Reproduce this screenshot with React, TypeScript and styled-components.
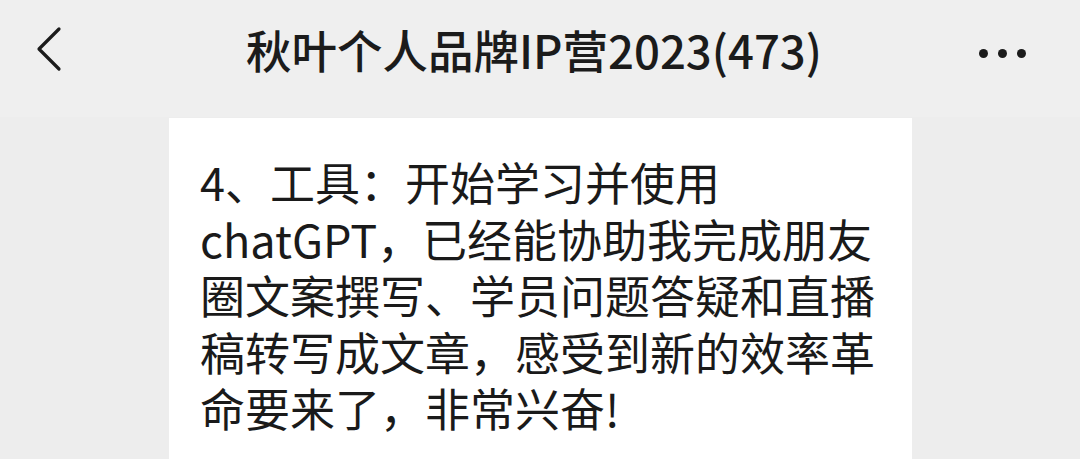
import React from "react";
import styled, { createGlobalStyle } from "styled-components";

const GlobalStyle = createGlobalStyle`
  html, body {
    margin: 0;
    padding: 0;
    background: #ededed;
    font-family: "Noto Sans CJK SC", "Noto Sans", sans-serif;
  }
`;

export default function App() {
  return (
    <>
      <GlobalStyle />
      <StyledPage>
        <StyledHeader>
          <StyledBack aria-label="back">
            <svg width="30" height="48" viewBox="0 0 30 48" fill="none">
              <path
                d="M25 4 L5 24 L25 44"
                stroke="#1b1b1b"
                strokeWidth="3.2"
                strokeLinecap="round"
                strokeLinejoin="round"
              />
            </svg>
          </StyledBack>
          <StyledTitle>秋叶个人品牌IP营2023(473)</StyledTitle>
          <StyledMore aria-label="more">
            <StyledDot />
            <StyledDot />
            <StyledDot />
          </StyledMore>
        </StyledHeader>
        <StyledChat>
          <StyledBubble>
            4、工具：开始学习并使用chatGPT，已经能协助我完成朋友圈文案撰写、学员问题答疑和直播稿转写成文章，感受到新的效率革命要来了，非常兴奋!
          </StyledBubble>
        </StyledChat>
      </StyledPage>
    </>
  );
}

const StyledPage = styled.div`
  width: 1080px;
  height: 459px;
  overflow: hidden;
  display: flex;
  flex-direction: column;
  background: #ededed;
`;

const StyledHeader = styled.header`
  height: 117px;
  flex-shrink: 0;
  display: grid;
  grid-template-columns: 120px 1fr 120px;
  align-items: center;
  background: #efefef;
  padding-bottom: 19px;
  box-sizing: border-box;
`;

const StyledBack = styled.div`
  display: flex;
  align-items: center;
  height: 60px;
  padding-left: 34px;
`;

const StyledMore = styled.div`
  display: flex;
  align-items: center;
  justify-content: flex-start;
  gap: 10px;
  height: 60px;
  padding-left: 19px;
  padding-top: 9px;
`;

const StyledDot = styled.span`
  width: 9px;
  height: 9px;
  border-radius: 50%;
  background: #1b1b1b;
`;

const StyledTitle = styled.h1`
  margin: 0;
  text-align: center;
  font-size: 45.5px;
  font-weight: 500;
  color: #1b1b1b;
  white-space: nowrap;
  padding-right: 12px;
`;

const StyledChat = styled.main`
  flex: 1;
  padding-top: 1px;
  padding-left: 169px;
`;

const StyledBubble = styled.div`
  width: 743px;
  box-sizing: border-box;
  min-height: 400px;
  background: #ffffff;
  padding: 36px 30px 0 31px;
  font-size: 45px;
  line-height: 56.5px;
  color: #1a1a1a;
`;
